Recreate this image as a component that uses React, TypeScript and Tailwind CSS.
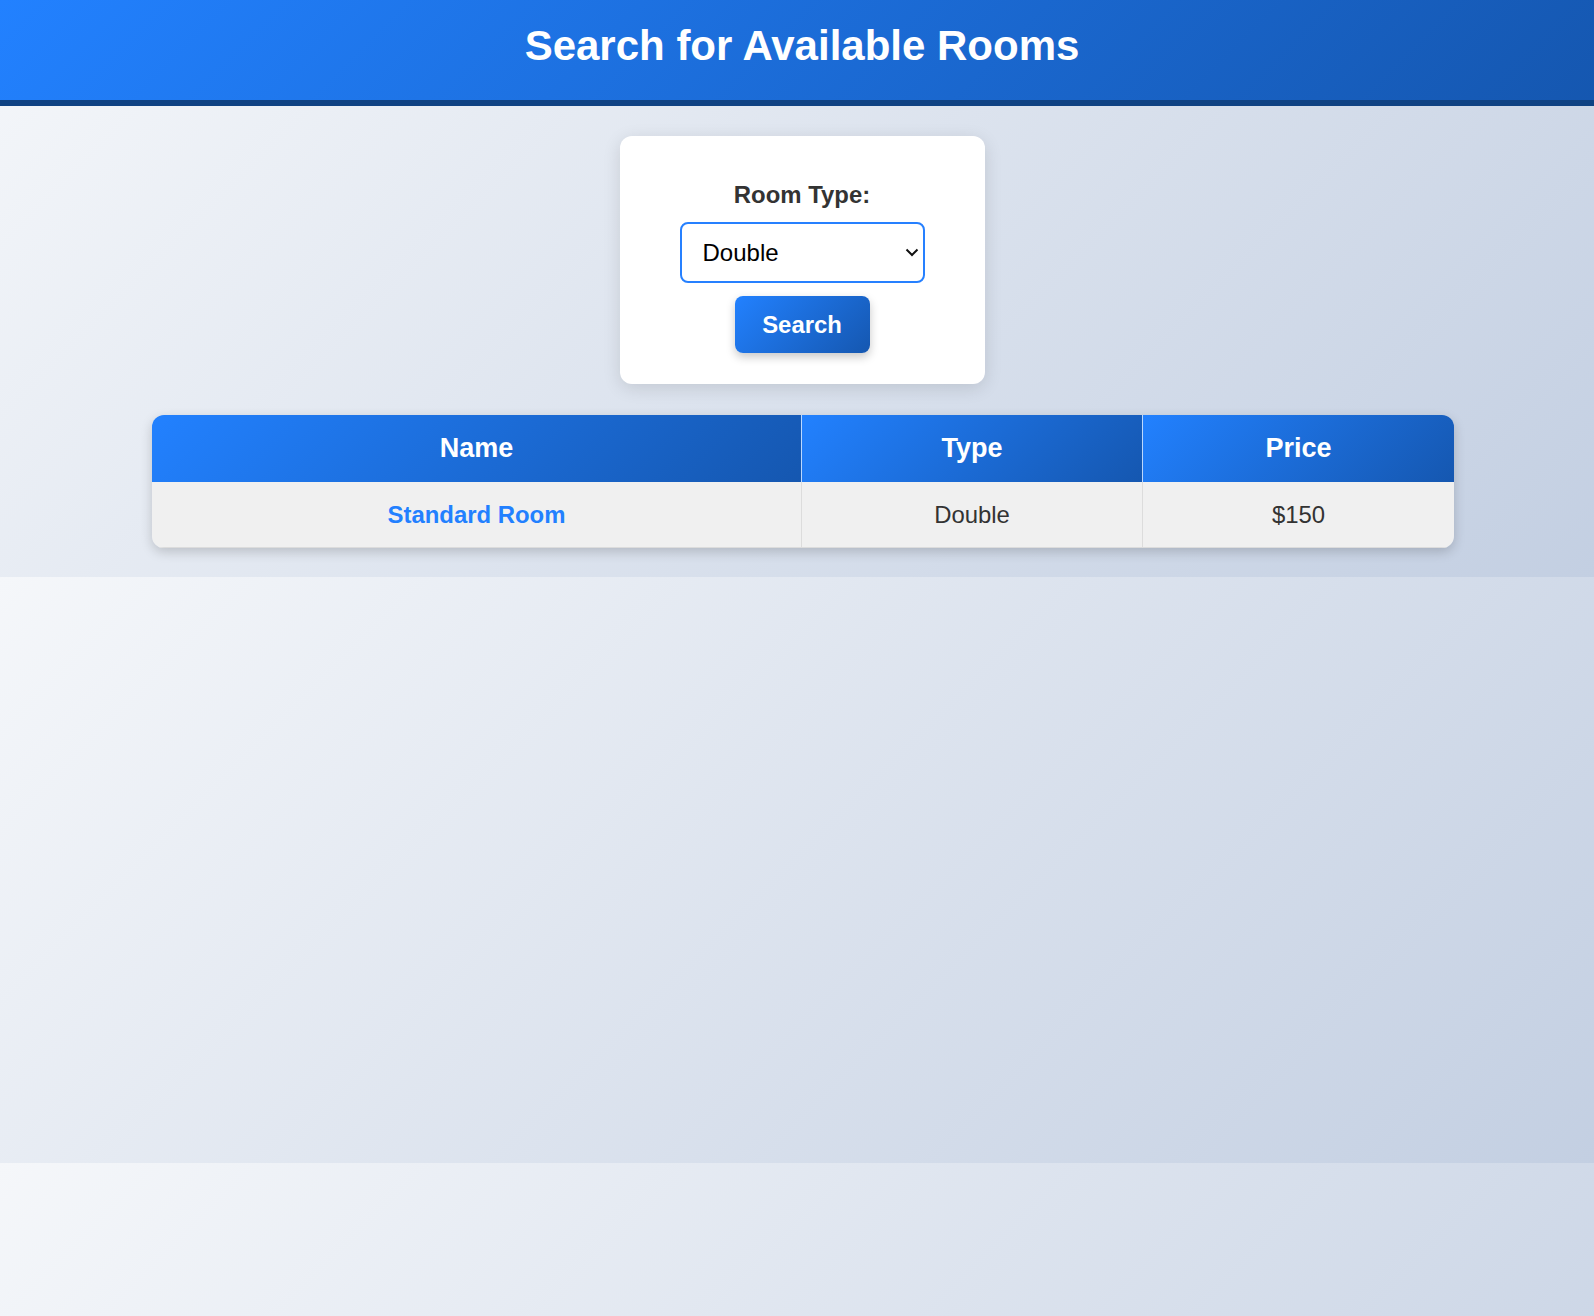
import { useState } from 'react';

const rooms = [{ name: 'Standard Room', type: 'Double', price: 150 }];

export default function App() {
  const [roomType, setRoomType] = useState('Double');

  return (
    <div className="min-h-screen bg-[linear-gradient(135deg,#f5f7fa_0%,#c3cfe2_100%)] bg-[length:100%_586px] bg-[position:0_-9px] bg-repeat font-['Liberation_Sans',Arial,sans-serif]">
      <header className="h-[106px] border-b-[6px] border-[#0f4283] bg-[linear-gradient(135deg,#2281ff,#1557b0)] pl-[10px] pt-[23px]">
        <h1 className="text-center text-[42px] font-bold leading-[46px] text-white">
          Search for Available Rooms
        </h1>
      </header>

      <main className="pl-[10px] pt-[30px] pb-[30px]">
        <div className="mx-auto flex w-[365px] flex-col items-center rounded-xl bg-white pt-[45px] pb-[31px] shadow-[0_4px_18px_rgba(0,0,0,0.12)]">
          <label className="text-[23.9px] font-bold leading-[27px] text-[#333]">Room Type:</label>
          <div className="relative mt-[14px] h-[61px] w-[245px]">
            <select
              value={roomType}
              onChange={(e) => setRoomType(e.target.value)}
              className="h-full w-full appearance-none rounded-lg border-2 border-[#2680ff] bg-white pl-[21px] text-[24px] text-black outline-none"
            >
              <option>Single</option>
              <option>Double</option>
              <option>Suite</option>
            </select>
            <svg
              className="pointer-events-none absolute right-[6px] top-[26px]"
              width="14"
              height="9"
              viewBox="0 0 14 9"
              fill="none"
              stroke="#111"
              strokeWidth="2"
            >
              <path d="M1.5 1.5l5.5 5.5 5.5-5.5" />
            </svg>
          </div>
          <button className="mt-[13px] h-[57px] w-[135px] rounded-lg bg-[linear-gradient(135deg,#2281ff,#1557b0)] text-[23.9px] font-bold text-white shadow-[0_4px_10px_rgba(0,0,0,0.22)]">
            Search
          </button>
        </div>

        <div className="pl-[2px]">
          <div className="mx-auto mt-[31px] w-[1302px] overflow-hidden rounded-xl shadow-[0_4px_12px_rgba(0,0,0,0.18)]">
            <div className="grid grid-cols-[650px_341px_311px]">
              <div className="flex h-[67px] items-center justify-center border-r border-white/70 bg-[linear-gradient(135deg,#2281ff,#1557b0)] text-[27px] font-bold text-white">
                Name
              </div>
              <div className="flex h-[67px] items-center justify-center border-r border-white/70 bg-[linear-gradient(135deg,#2281ff,#1557b0)] text-[27px] font-bold text-white">
                Type
              </div>
              <div className="flex h-[67px] items-center justify-center bg-[linear-gradient(135deg,#2281ff,#1557b0)] text-[27px] font-bold text-white">
                Price
              </div>
              {rooms.map((r) => (
                <div key={r.name} className="contents">
                  <div className="flex h-[66px] items-center justify-center border-r border-b border-[#dcdcdc] bg-[#f0f0f0] pt-[1px] text-[23.9px] font-bold text-[#2280ff]">
                    {r.name}
                  </div>
                  <div className="flex h-[66px] items-center justify-center border-r border-b border-[#dcdcdc] bg-[#f0f0f0] pt-[1px] text-[23.9px] text-[#333]">
                    {r.type}
                  </div>
                  <div className="flex h-[66px] items-center justify-center border-b border-[#dcdcdc] bg-[#f0f0f0] pt-[1px] text-[23.9px] text-[#333]">
                    ${r.price}
                  </div>
                </div>
              ))}
            </div>
          </div>
        </div>
      </main>
    </div>
  );
}
